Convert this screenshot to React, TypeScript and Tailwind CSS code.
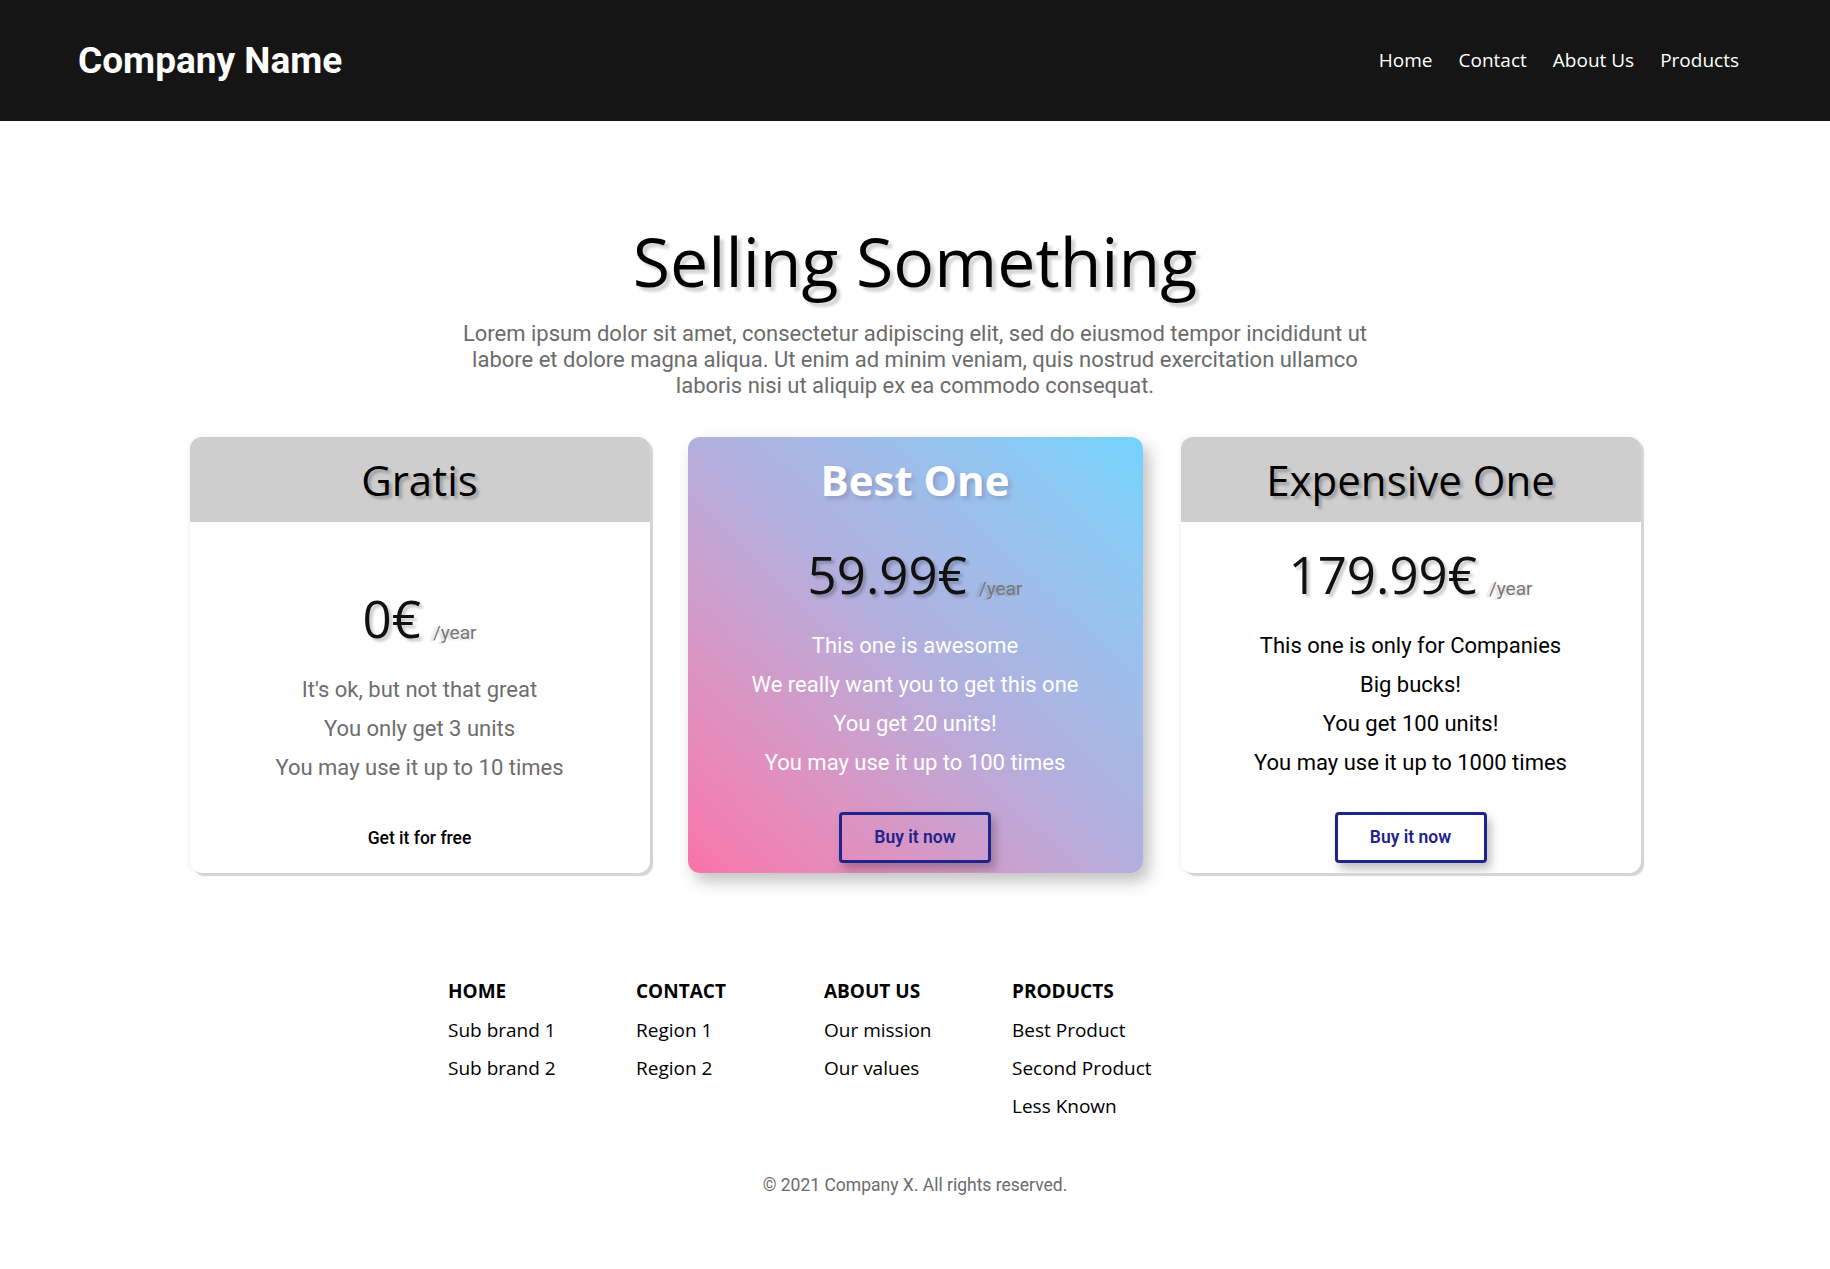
import React from "react";

const plans = [
  {
    name: "Gratis",
    price: "0€",
    features: ["It's ok, but not that great", "You only get 3 units", "You may use it up to 10 times"],
    cta: "Get it for free",
    variant: "free",
  },
  {
    name: "Best One",
    price: "59.99€",
    features: [
      "This one is awesome",
      "We really want you to get this one",
      "You get 20 units!",
      "You may use it up to 100 times",
    ],
    cta: "Buy it now",
    variant: "best",
  },
  {
    name: "Expensive One",
    price: "179.99€",
    features: ["This one is only for Companies", "Big bucks!", "You get 100 units!", "You may use it up to 1000 times"],
    cta: "Buy it now",
    variant: "pro",
  },
];

const footerCols = [
  { title: "HOME", links: ["Sub brand 1", "Sub brand 2"] },
  { title: "CONTACT", links: ["Region 1", "Region 2"] },
  { title: "ABOUT US", links: ["Our mission", "Our values"] },
  { title: "PRODUCTS", links: ["Best Product", "Second Product", "Less Known"] },
];

const PlanCard = ({ plan }: { plan: (typeof plans)[number] }) => {
  const best = plan.variant === "best";
  return (
    <div
      className={`flex h-[436px] flex-col overflow-hidden rounded-[12px] ${
        best
          ? "w-[455px] bg-linear-to-tr from-[#fa73a8] via-[#b3aedd] to-[#72d4fd] shadow-[6px_8px_16px_rgba(0,0,0,0.25)]"
          : "w-[460px] bg-white shadow-[3px_3px_1px_#d4d4d4,0_0_6px_rgba(0,0,0,0.08)]"
      }`}
    >
      <div
        className={`flex h-[85px] shrink-0 items-center justify-center font-['Open_Sans',sans-serif] text-[42px] ${
          best
            ? "font-bold text-white [text-shadow:3px_3px_4px_rgba(120,120,160,0.45)]"
            : "bg-[#cecece] text-black [text-shadow:3px_3px_3px_rgba(0,0,0,0.25)]"
        }`}
      >
        {plan.name}
      </div>
      <div className="flex flex-1 flex-col items-center justify-end pb-[10px]">
        <div className="flex items-end gap-[12px] leading-none">
          <span className="font-['Open_Sans',sans-serif] text-[51px] text-[#111] [text-shadow:3px_3px_3px_rgba(0,0,0,0.22)]">
            {plan.price}
          </span>
          <span className="mb-[2px] font-['Roboto',sans-serif] text-[19px] text-[#777] [text-shadow:-3px_1px_2px_rgba(0,0,0,0.15)]">
            /year
          </span>
        </div>
        <div
          className={`mt-[26px] flex flex-col items-center font-['Roboto',sans-serif] text-[22px] leading-[39px] ${
            plan.variant === "free" ? "text-[#6d6d6d]" : best ? "text-white" : "text-black"
          }`}
        >
          {plan.features.map((f) => (
            <div key={f}>{f}</div>
          ))}
        </div>
        {plan.variant === "free" ? (
          <button className="mt-[26px] h-[50px] px-4 font-['Roboto',sans-serif] text-[17.5px] font-medium text-black">
            {plan.cta}
          </button>
        ) : (
          <button className="mt-[30px] h-[51px] w-[152px] rounded-[4px] border-[3px] border-[#1f248c] font-['Roboto',sans-serif] text-[17.5px] font-semibold text-[#1f248c] shadow-[4px_6px_10px_rgba(0,0,0,0.25)]">
            {plan.cta}
          </button>
        )}
      </div>
    </div>
  );
};

export default function App() {
  return (
    <div className="min-h-[1269px] bg-white">
      <header className="flex h-[121px] items-center justify-between bg-[#151515] pl-[78px] pr-[91px]">
        <div className="font-['Roboto',sans-serif] text-[37px] font-bold text-white">Company Name</div>
        <nav className="flex gap-[26px] font-['Open_Sans',sans-serif] text-[19px] text-white">
          <a>Home</a>
          <a>Contact</a>
          <a>About Us</a>
          <a>Products</a>
        </nav>
      </header>

      <section className="flex flex-col items-center pt-[106px]">
        <h1 className="font-['Open_Sans',sans-serif] text-[68px] leading-none text-black [text-shadow:4px_4px_3px_rgba(0,0,0,0.18)]">
          Selling Something
        </h1>
        <p className="mt-[26px] w-[910px] text-center font-['Roboto',sans-serif] text-[22px] leading-[26px] text-[#6b6b6b]">
          Lorem ipsum dolor sit amet, consectetur adipiscing elit, sed do eiusmod tempor incididunt ut labore et dolore
          magna aliqua. Ut enim ad minim veniam, quis nostrud exercitation ullamco laboris nisi ut aliquip ex ea commodo
          consequat.
        </p>
        <div className="mt-[38px] flex gap-[38px]">
          {plans.map((p) => (
            <PlanCard key={p.name} plan={p} />
          ))}
        </div>
      </section>

      <footer className="pt-[99px]">
        <div className="mx-auto flex w-[940px] font-['Open_Sans',sans-serif] text-[19px] text-black">
          {footerCols.map((col) => (
            <div key={col.title} className="w-[188px] pl-[3px]">
              <div className="font-bold leading-[39px]">{col.title}</div>
              {col.links.map((l) => (
                <div key={l} className="leading-[38px]">
                  {l}
                </div>
              ))}
            </div>
          ))}
        </div>
        <div className="mt-[47px] text-center font-['Roboto',sans-serif] text-[17.5px] text-[#6b6b6b]">
          © 2021 Company X. All rights reserved.
        </div>
      </footer>
    </div>
  );
}
